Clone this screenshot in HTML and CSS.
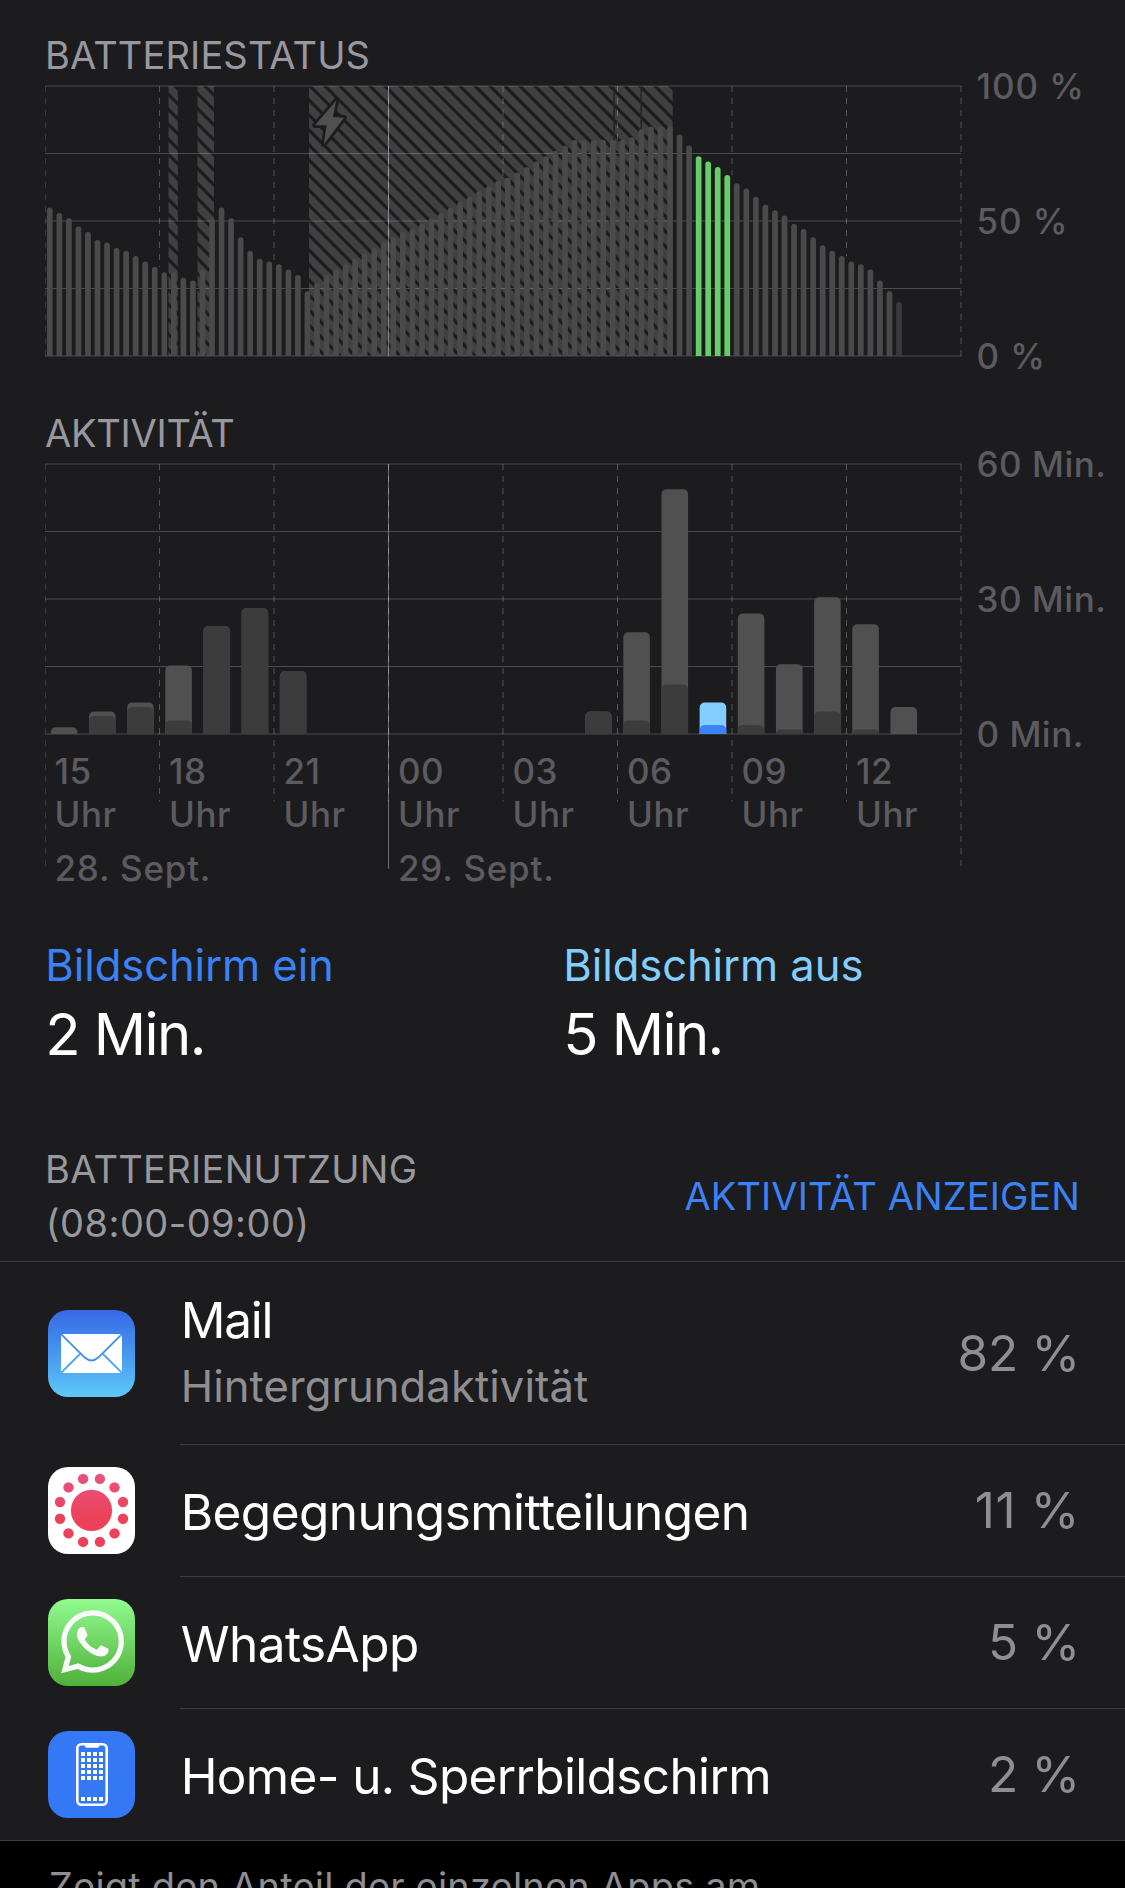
FILE: index.html
```
<!DOCTYPE html>
<html lang="de">
<head>
<meta charset="utf-8">
<title>Batterie</title>
<link rel="stylesheet" href="styles.css">
</head>
<body>
<main class="panel">
  <section class="chart">
    <h2 class="caption">BATTERIESTATUS</h2>
    <div class="chart-body">
      <svg class="plot" id="battery" width="918" height="272" viewBox="45 85 918 272">
        <defs>
          <pattern id="hatch" width="15" height="15" patternUnits="userSpaceOnUse">
            <rect width="15" height="15" fill="#404040"/>
            <path d="M-5-4 20 21M-20-4 5 21M10-4 35 21" stroke="#1c1c1e" stroke-width="3.2"/>
          </pattern>
        </defs>
        <g fill="url(#hatch)">
          <path d="M168.5 86h9.3v270h-9.3zM197.5 86h16.5v270h-16.5zM309 86h304.5v270h-304.5zM615 86h25.7v270h-25.7zM641.7 86h31v270h-31z"/>
        </g>
        <path d="M614.2 86v270M641.2 86v270" stroke="#222a27" stroke-width="1.4"/>
        <g class="grid"></g>
        <g class="bars"></g>
        <path class="bolt" d="M336.3 100.5 315 125.3h11.6l-2.8 19.2L344 117.8l-11.2-.8z"/>
      </svg>
      <div class="scale">
        <span>100 %</span><span>50 %</span><span>0 %</span>
      </div>
    </div>
  </section>

  <section class="chart chart-activity">
    <h2 class="caption caption-activity">AKTIVITÄT</h2>
    <div class="chart-body">
      <svg class="plot" id="activity" width="918" height="406" viewBox="45 463 918 406">
        <g class="grid"></g>
        <g class="bars"></g>
      </svg>
      <div class="time">
        <div class="hours">
          <span>15<br>Uhr</span><span>18<br>Uhr</span><span>21<br>Uhr</span><span>00<br>Uhr</span><span>03<br>Uhr</span><span>06<br>Uhr</span><span>09<br>Uhr</span><span>12<br>Uhr</span>
        </div>
        <div class="dates"><span>28. Sept.</span><span>29. Sept.</span></div>
      </div>
      <div class="scale scale-min">
        <span>60 Min.</span><span>30 Min.</span><span>0 Min.</span>
      </div>
    </div>
  </section>

  <section class="legend">
    <div>
      <div class="legend-name on">Bildschirm ein</div>
      <div class="legend-value">2 Min.</div>
    </div>
    <div>
      <div class="legend-name off">Bildschirm aus</div>
      <div class="legend-value">5 Min.</div>
    </div>
  </section>

  <header class="usage-head">
    <h2>BATTERIENUTZUNG<br><span class="range">(08:00-09:00)</span></h2>
    <a class="toggle">AKTIVITÄT ANZEIGEN</a>
  </header>

  <ul class="apps">
    <li class="app app-tall">
      <svg class="icon" viewBox="0 0 87 87">
        <defs><linearGradient id="mailBg" x2="0" y2="1"><stop offset="0" stop-color="#3768e6"/><stop offset=".5" stop-color="#4797ef"/><stop offset="1" stop-color="#5fc9fa"/></linearGradient></defs>
        <rect width="87" height="87" rx="20" fill="url(#mailBg)"/>
        <rect x="13" y="24" width="61" height="39" rx="1.8" fill="#fff"/>
        <g fill="none" stroke-width="1.9">
          <path d="M13.3 24.3 36.5 47.3Q43.5 53.6 50.5 47.3L73.7 24.3" stroke="#468ff0"/>
          <path d="M32 44 13.3 62.7M55 44 73.7 62.7" stroke="#4ba6f3"/>
        </g>
      </svg>
      <div class="app-body">
        <div class="app-text">
          <div class="app-name name-short">Mail</div>
          <div class="app-note">Hintergrundaktivität</div>
        </div>
        <div class="share">82 %</div>
      </div>
    </li>
    <li class="app">
      <svg class="icon" viewBox="0 0 87 87">
        <defs><linearGradient id="dots" gradientUnits="userSpaceOnUse" x1="0" y1="8" x2="0" y2="50"><stop offset="0" stop-color="#e9527f"/><stop offset="1" stop-color="#eb4259"/></linearGradient></defs>
        <rect width="87" height="87" rx="20" fill="#fff"/>
        <g fill="url(#dots)">
          <circle cx="43.5" cy="43.4" r="20.6"/>
          <circle cx="35.1" cy="11.9" r="5.2"/><circle cx="51.9" cy="11.9" r="5.2"/>
          <circle cx="66.5" cy="20.4" r="5.2"/><circle cx="75" cy="35" r="5.2"/>
          <circle cx="75" cy="51.8" r="5.2"/><circle cx="66.5" cy="66.4" r="5.2"/>
          <circle cx="51.9" cy="74.9" r="5.2"/><circle cx="35.1" cy="74.9" r="5.2"/>
          <circle cx="20.5" cy="66.4" r="5.2"/><circle cx="12" cy="51.8" r="5.2"/>
          <circle cx="12" cy="35" r="5.2"/><circle cx="20.5" cy="20.4" r="5.2"/>
        </g>
      </svg>
      <div class="app-body">
        <div class="app-text"><div class="app-name">Begegnungsmitteilungen</div></div>
        <div class="share share-11">11 %</div>
      </div>
    </li>
    <li class="app">
      <svg class="icon" viewBox="0 0 87 87">
        <defs><linearGradient id="waBg" x2="0" y2="1"><stop offset="0" stop-color="#91fb8f"/><stop offset="1" stop-color="#50b03a"/></linearGradient></defs>
        <rect width="87" height="87" rx="20" fill="url(#waBg)"/>
        <path transform="translate(13 11.2) scale(2.63)" fill="#fafafa" d="M17.472 14.382c-.297-.149-1.758-.867-2.03-.967-.273-.099-.471-.148-.67.15-.197.297-.767.966-.94 1.164-.173.199-.347.223-.644.075-.297-.15-1.255-.463-2.39-1.475-.883-.788-1.48-1.761-1.653-2.059-.173-.297-.018-.458.13-.606.134-.133.298-.347.446-.52.149-.174.198-.298.298-.497.099-.198.05-.371-.025-.52-.075-.149-.669-1.612-.916-2.207-.242-.579-.487-.5-.669-.51-.173-.008-.371-.01-.57-.01-.198 0-.52.074-.792.372-.272.297-1.04 1.016-1.04 2.479 0 1.462 1.065 2.875 1.213 3.074.149.198 2.096 3.2 5.077 4.487.709.306 1.262.489 1.694.625.712.227 1.36.195 1.871.118.571-.085 1.758-.719 2.006-1.413.248-.694.248-1.289.173-1.413-.074-.124-.272-.198-.57-.347m-5.421 7.403h-.004a9.87 9.87 0 01-5.031-1.378l-.361-.214-3.741.982.998-3.648-.235-.374a9.86 9.86 0 01-1.51-5.26c.001-5.45 4.436-9.884 9.888-9.884 2.64 0 5.122 1.03 6.988 2.898a9.825 9.825 0 012.893 6.994c-.003 5.45-4.437 9.884-9.885 9.884m8.413-18.297A11.815 11.815 0 0012.05 0C5.495 0 .16 5.335.157 11.892c0 2.096.547 4.142 1.588 5.945L.057 24l6.305-1.654a11.882 11.882 0 005.683 1.448h.005c6.554 0 11.89-5.335 11.893-11.893a11.821 11.821 0 00-3.48-8.413z"/>
      </svg>
      <div class="app-body">
        <div class="app-text"><div class="app-name">WhatsApp</div></div>
        <div class="share">5 %</div>
      </div>
    </li>
    <li class="app">
      <svg class="icon" viewBox="0 0 87 87">
        <rect width="87" height="87" rx="20" fill="#3478f6"/>
        <rect x="29.3" y="13.3" width="29.4" height="60.4" rx="4" fill="none" stroke="#fff" stroke-width="2.6"/>
        <path d="M36.8 13h14.6v1.7a2 2 0 0 1-2 2H38.8a2 2 0 0 1-2-2z" fill="#fff"/>
        <path d="M33 22.9h22M33 28.9h22M33 34.9h22M33 40.9h22M33 46.9h22M33 67.9h22" stroke="#fff" stroke-width="4" stroke-dasharray="4 2"/>
      </svg>
      <div class="app-body">
        <div class="app-text"><div class="app-name name-long">Home- u. Sperrbildschirm</div></div>
        <div class="share">2 %</div>
      </div>
    </li>
  </ul>
</main>
<footer class="footnote">Zeigt den Anteil der einzelnen Apps am</footer>
<script src="script.js"></script>
</body>
</html>
```
FILE: styles.css
```
* { box-sizing: border-box; }

body {
  margin: 0;
  width: 1125px;
  height: 1888px;
  overflow: hidden;
  background: #000;
  color: #fff;
  font-family: Inter, "Liberation Sans", sans-serif;
  font-size: 38px;
}

h2, ul { margin: 0; padding: 0; font-weight: 400; list-style: none; }

.panel { background: #1c1c1e; padding-top: 32px; }

.caption {
  padding-left: 45px;
  font-size: 38px;
  line-height: 46px;
  letter-spacing: .14px;
  color: #98989f;
}
.caption-activity { letter-spacing: -.25px; }

.chart-body {
  display: grid;
  grid-template-columns: 918px 1fr;
  padding: 7px 0 0 45px;
}
.chart-activity { padding-top: 53px; }
.plot { display: block; grid-area: 1 / 1; }

.scale {
  grid-area: 1 / 2;
  align-self: start;
  display: flex;
  flex-direction: column;
  justify-content: space-between;
  height: 310px;
  margin: -19px 0;
  padding-left: 13.5px;
  font-size: 35px;
  font-weight: 500;
  line-height: 40px;
  letter-spacing: .9px;
  color: #5b5b60;
}
.scale-min { letter-spacing: .5px; }

.time {
  grid-area: 1 / 1;
  padding-top: 287px;
  font-size: 35px;
  font-weight: 500;
  letter-spacing: .5px;
  color: #5b5b60;
}
.hours {
  display: grid;
  grid-template-columns: repeat(8, 114.5px);
  line-height: 42.7px;
}
.dates {
  display: grid;
  grid-template-columns: 343.5px 1fr;
  padding-top: 11.6px;
  line-height: 43px;
}
.hours span, .dates span { padding-left: 9.5px; }
.dates span { letter-spacing: .78px; }

.grid line { stroke: #ebebf5; stroke-opacity: .23; }
.grid .midnight { stroke-opacity: .4; }
.grid .dashed { stroke-dasharray: 6 6; stroke-opacity: .27; }

.level { fill: #4a4a4a; }
.level-selected { fill: #67ce67; }
.level-partial { fill: #3a3a3c; }
.screen-off { fill: #505050; }
.screen-on { fill: #3c3c3c; }
.selected .screen-off { fill: #82cfff; }
.selected .screen-on { fill: #3b82f7; }
.bolt {
  fill: #505050;
  stroke: #1c1c1e;
  stroke-width: 5.5;
  stroke-linejoin: round;
  paint-order: stroke;
}

.legend {
  display: grid;
  grid-template-columns: 518px 1fr;
  padding: 49px 0 73.4px 45.3px;
}
.legend-name { font-size: 43.6px; line-height: 54px; letter-spacing: -.1px; }
.legend-name.on { color: #3b82f7; }
.legend-name.off { color: #82cfff; }
.legend-value {
  margin-top: 5.6px;
  font-size: 58px;
  line-height: 70px;
  letter-spacing: -1.6px;
}

.usage-head {
  display: flex;
  justify-content: space-between;
  align-items: center;
  height: 120px;
  padding: 0 45px 11px;
  border-bottom: 1px solid #3d3d40;
  color: #98989f;
}
.usage-head h2 { font-size: 38px; line-height: 54px; letter-spacing: .3px; }
.usage-head .range { padding-left: .8px; letter-spacing: .45px; }
.toggle { color: #3b82f7; line-height: 54px; letter-spacing: .08px; }

.app {
  display: flex;
  align-items: center;
  height: 132px;
  padding-left: 48px;
}
.app-tall { height: 183px; }
.icon { width: 87px; height: 87px; flex: none; margin-bottom: 1px; }
.app-body {
  flex: 1;
  align-self: stretch;
  display: flex;
  align-items: center;
  justify-content: space-between;
  margin-left: 45px;
  padding-right: 45px;
  border-bottom: 1px solid #3d3d40;
}
.app:last-child { border-bottom: 1px solid #3d3d40; }
.app:last-child .app-body { border-bottom: 0; }
.app:last-child .icon, .app-tall .icon { margin-bottom: 0; }
.app-text { padding: 3px 0 0 .7px; }
.app-tall .app-text { padding: 0 0 2px .7px; }
.app-name { font-size: 49.5px; line-height: 60px; letter-spacing: -.55px; }
.name-long { letter-spacing: -.64px; }
.name-short { letter-spacing: -1.2px; }
.app-note {
  margin-top: 10px;
  font-size: 43.6px;
  line-height: 54px;
  letter-spacing: .06px;
  color: #8e8e93;
}
.share { font-size: 49.5px; line-height: 60px; letter-spacing: -.2px; color: #8e8e93; }
.share-11 { letter-spacing: .6px; }

.footnote {
  padding: 20px 0 0 49px;
  font-size: 38px;
  line-height: 50px;
  letter-spacing: .19px;
  white-space: nowrap;
  color: #8e8e93;
}
```
FILE: script.js
```
// Charge level in percent, one value per quarter of an hour.
const levels = [
  55, 53, 51, 48, 46, 43, 42, 40, 39, 37, 35, 33, 31, 31, 29, 28, 32, 51,
  55, 51, 44, 39, 36, 35, 34, 32, 30, 24, 27, 30, 32, 34, 36, 38, 40, 42,
  44, 46, 47, 49, 51, 53, 55, 57, 59, 61, 63, 65, 66, 68, 70, 72, 74, 76,
  78, 80, 80, 80, 80, 80, 80, 81, 84, 85, 85, 85, 82, 78, 74, 72, 70, 67,
  64, 62, 59, 56, 54, 52, 49, 47, 44, 41, 39, 37, 35, 34, 32, 28, 24, 20
];

// Hour slot: [minutes in total, minutes with the screen on].
const usage = {
  0: [1.5, 0], 1: [5, 4], 2: [7, 6], 3: [15.2, 3], 4: [24, 24], 5: [28, 28],
  6: [14, 14], 14: [5, 5], 15: [22.6, 3], 16: [54.4, 11], 17: [7, 2],
  18: [26.8, 2], 19: [15.5, 1], 20: [30.4, 5], 21: [24.4, 1], 22: [6, 0]
};

const LEFT = 45, WIDTH = 916, HEIGHT = 270;
const SELECTED_HOUR = 17;

const line = (x1, y1, x2, y2, cls = '') =>
  `<line x1="${x1}" y1="${y1}" x2="${x2}" y2="${y2}" class="${cls}"/>`;

// A bar whose upper corners are rounded.
const bar = (x, w, h, r, bottom, cls) => {
  const k = Math.min(r, h);
  return `<path class="${cls}" d="M${x} ${bottom}v${k - h}q0 ${-k} ${k} ${-k}h${w - 2 * k}q${k} 0 ${k} ${k}v${h - k}z"/>`;
};

function grid(top, dashEnd, midnightEnd) {
  let out = '';
  [0, 67.5, 135, 202.5, 270].forEach(d => {
    out += line(LEFT, top + d, LEFT + WIDTH, top + d);
  });
  for (let k = 0; k <= 8; k++) {
    const x = LEFT + k * 114.5;
    if (k === 3) out += line(x, top, x, midnightEnd, 'midnight');
    out += line(x, top, x, dashEnd(k), 'dashed');
  }
  return out;
}

function drawBattery() {
  const svg = document.getElementById('battery');
  const top = 86, bottom = top + HEIGHT, step = WIDTH / 96;
  const dashEnd = k => k === 0 || k === 8
    ? bottom
    : bottom - 2.7 * Math.max(levels[12 * k - 1], levels[12 * k]);
  svg.querySelector('.grid').innerHTML = grid(top, dashEnd, bottom);
  svg.querySelector('.bars').innerHTML = levels.map((v, i) => {
    const hour = Math.floor(i / 4);
    const cls = hour === SELECTED_HOUR ? 'level-selected'
      : i === levels.length - 1 ? 'level-partial' : 'level';
    return bar(LEFT + i * step + 1.95, 5.7, v * 2.7, 2.8, bottom, cls);
  }).join('');
}

function drawActivity() {
  const svg = document.getElementById('activity');
  const top = 464, bottom = top + HEIGHT, step = WIDTH / 24;
  const dashEnd = k => (k === 0 || k === 8 ? 866 : 801.5);
  svg.querySelector('.grid').innerHTML = grid(top, dashEnd, 868.7);
  svg.querySelector('.bars').innerHTML = Object.entries(usage).map(([slot, [all, on]]) => {
    const x = LEFT + slot * step + 5.8;
    const parts = bar(x, 26.6, all * 4.5, 5.5, bottom, 'screen-off') +
      (on ? bar(x, 26.6, on * 4.5, 5.5, bottom, 'screen-on') : '');
    return `<g class="${+slot === SELECTED_HOUR ? 'selected' : ''}">${parts}</g>`;
  }).join('');
}

drawBattery();
drawActivity();
```
